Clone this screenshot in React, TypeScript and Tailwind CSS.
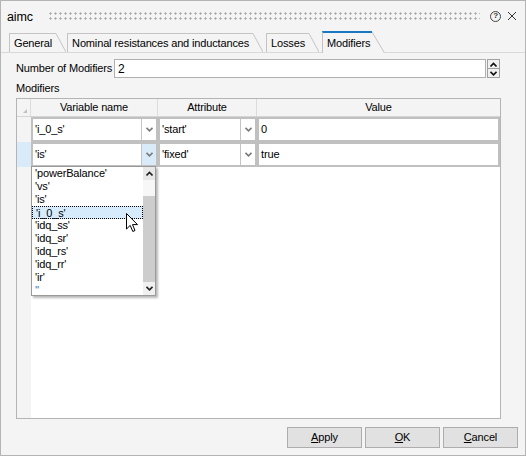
import React from 'react';

const items = ["'powerBalance'", "'vs'", "'is'", "'i_0_s'", "'idq_ss'", "'idq_sr'", "'idq_rs'", "'idq_rr'", "'ir'", "''"];

function Chevron({ up = false, color = '#7a7a7a' }: { up?: boolean; color?: string }) {
  return (
    <svg width="7" height="5" viewBox="0 0 7 5">
      <path
        d={up ? 'M0.5 4.5 L3.5 1.5 L6.5 4.5' : 'M0.5 0.8 L3.5 3.8 L6.5 0.8'}
        fill="none"
        stroke={color}
        strokeWidth="1.6"
      />
    </svg>
  );
}

function Tab({ label, gap, selected = false }: { label: string; gap: string; selected?: boolean }) {
  if (selected) {
    return (
      <div className={`flex items-end ${gap} border-b border-[#d9d9d9]`}>
        <div className="h-[22px] -mb-px bg-[#f4f4f4] flex items-end">
          <div className="h-[22px] border-t-2 border-l border-t-[#1a78c2] border-l-[#c4c4c4] pl-[4px] pr-[2px] flex items-center whitespace-nowrap">
            {label}
          </div>
          <svg width="13" height="22" viewBox="0 0 13 22">
            <line x1="0" y1="1" x2="12.5" y2="22" stroke="#c4c4c4" />
          </svg>
        </div>
      </div>
    );
  }
  return (
    <div className={`flex items-end ${gap} border-b border-[#d9d9d9]`}>
      <div className="h-[19px] border-t border-l border-[#c4c4c4] pl-[4px] pr-[4px] flex items-center whitespace-nowrap">
        {label}
      </div>
      <svg width="10" height="19" viewBox="0 0 10 19">
        <line x1="0" y1="0.5" x2="10" y2="19" stroke="#c4c4c4" />
      </svg>
    </div>
  );
}

function ComboCell({ text, hover = false }: { text: string; hover?: boolean }) {
  return (
    <div className="flex h-full border-2 border-[#c0c0c0] bg-white">
      <div className="flex-1 flex items-center pl-[2px] whitespace-nowrap">{text}</div>
      <div
        className={`w-[15px] border-l border-[#c4c4c4] flex items-center justify-center ${
          hover ? 'bg-[#d9ebf9]' : ''
        }`}
      >
        <Chevron />
      </div>
    </div>
  );
}

function Btn({ first, rest }: { first: string; rest: string }) {
  return (
    <button className="w-[75px] h-[21px] bg-[#e1e1e1] border border-[#adadad] flex items-center justify-center">
      <span className="underline underline-offset-1">{first}</span>
      {rest}
    </button>
  );
}

export default function App() {
  return (
    <div className="w-[526px] h-[456px] bg-[#f4f4f4] border border-[#b4b4b4] flex flex-col text-[11px] tracking-[-0.15px] text-black font-['Liberation_Sans',Arial,sans-serif]">
      {/* Title bar */}
      <div className="h-[30px] flex items-center pl-[6px] pr-[8px] shrink-0">
        <span className="text-[12.5px] pt-[2px]">aimc</span>
        <div className="flex-1 h-[10px] ml-[15px] mr-[10px] bg-[radial-gradient(circle,#a6a6a6_0.9px,transparent_1.3px)] bg-[length:5px_5px]" />
        <span className="w-[11px] h-[11px] rounded-full border border-[#444] flex items-center justify-center text-[8px] font-bold leading-none text-[#333]">
          ?
        </span>
        <svg width="10" height="10" viewBox="0 0 10 10" className="ml-[6px]">
          <path d="M1 1 L9 9 M9 1 L1 9" stroke="#333" strokeWidth="1" />
        </svg>
      </div>

      {/* Tabs */}
      <div className="flex items-end h-[22px] shrink-0">
        <div className="w-[6px] border-b border-[#d9d9d9]" />
        <Tab label="General" gap="pl-[2px]" />
        <Tab label="Nominal resistances and inductances" gap="pl-[1px]" />
        <Tab label="Losses" gap="pl-[3px]" />
        <Tab label="Modifiers" gap="pl-[3px]" selected />
        <div className="flex-1 border-b border-[#d9d9d9]" />
      </div>

      {/* Content */}
      <div className="flex-1 flex flex-col pl-[15px] pr-[24px] pt-[6px] min-h-0">
        <div className="flex items-center h-[19px] shrink-0">
          <span className="w-[98px] shrink-0 whitespace-nowrap">Number of Modifiers</span>
          <div className="flex-1 h-[19px] bg-white border border-[#b0b0b0] flex items-center pl-[3px] text-[12px]">
            2
          </div>
          <div className="w-[13px] h-[19px] ml-[1px] mr-[1px] border border-[#a0a0a0] bg-[#f0f0f0] flex flex-col">
            <div className="flex-1 flex items-center justify-center border-b border-[#a0a0a0]">
              <Chevron up color="#111" />
            </div>
            <div className="flex-1 flex items-center justify-center">
              <Chevron color="#111" />
            </div>
          </div>
        </div>

        <div className="h-[14px] mt-[3px] flex items-center shrink-0">Modifiers</div>

        {/* Table */}
        <div className="relative flex-1 mt-[3px] border border-[#b4b4b4] bg-white flex flex-col min-h-0">
          <div className="grid grid-cols-[14px_127px_99px_1fr] h-[18px] bg-[#f4f4f4] border-b border-[#d5d5d5]">
            <div className="border-r border-[#dcdcdc] flex items-end justify-end pr-[3px] pb-[3px]">
              <svg width="4" height="4" viewBox="0 0 4 4">
                <path d="M4 0 L4 4 L0 4 Z" fill="#c2c2c2" />
              </svg>
            </div>
            <div className="border-r border-[#dcdcdc] flex items-center justify-center">Variable name</div>
            <div className="border-r border-[#dcdcdc] flex items-center justify-center">Attribute</div>
            <div className="flex items-center justify-center">Value</div>
          </div>

          <div className="grid grid-cols-[14px_127px_99px_1fr] h-[25px]">
            <div className="bg-[#f4f4f4]" />
            <ComboCell text="'i_0_s'" />
            <ComboCell text="'start'" />
            <div className="border-2 border-[#c0c0c0] flex items-center pl-[2px]">0</div>
          </div>
          <div className="grid grid-cols-[14px_127px_99px_1fr] h-[25px]">
            <div className="bg-[#d9ebf9]" />
            <ComboCell text="'is'" hover />
            <ComboCell text="'fixed'" />
            <div className="border-2 border-[#c0c0c0] flex items-center pl-[2px]">true</div>
          </div>
          <div className="flex-1 flex">
            <div className="w-[14px] bg-[#f4f4f4]" />
            <div className="flex-1" />
          </div>

          {/* Drop-down list */}
          <div className="absolute left-[14px] top-[67px] w-[125px] h-[130px] bg-white border border-[#9a9a9a] shadow-[2px_2px_2px_rgba(0,0,0,0.28)] flex">
            <div className="flex-1 flex flex-col">
              {items.map((it) => (
                <div
                  key={it}
                  className={`h-[13px] leading-[13px] pl-[3px] whitespace-nowrap ${
                    it === "'i_0_s'" ? 'bg-[#d6ebfb] border border-dotted border-black pl-[2px] leading-[11px]' : ''
                  } ${it === "''" ? 'text-[#1a6fc4]' : ''}`}
                >
                  {it}
                </div>
              ))}
            </div>
            <div className="w-[12px] flex flex-col bg-[#f0f0f0]">
              <div className="h-[13px] flex items-center justify-center bg-[#e8e8e8]">
                <Chevron up color="#222" />
              </div>
              <div className="h-[16px] bg-[#f7f7f7]" />
              <div className="flex-1 bg-[#cdcdcd]" />
              <div className="h-[13px] flex items-center justify-center">
                <Chevron color="#222" />
              </div>
            </div>
          </div>

          {/* Mouse cursor */}
          <svg
            className="absolute left-[109px] top-[114px]"
            width="13"
            height="20"
            viewBox="0 0 13 20"
          >
            <path
              d="M0.5 0.5 L0.5 16 L4.2 12.4 L6.8 18.5 L9 17.5 L6.5 11.6 L11.5 11.6 Z"
              fill="white"
              stroke="black"
              strokeWidth="1"
              strokeLinejoin="round"
            />
          </svg>
        </div>

        {/* Buttons */}
        <div className="flex justify-end gap-[3px] mt-[8px] mb-[7px] -mr-[17px] shrink-0">
          <Btn first="A" rest="pply" />
          <Btn first="O" rest="K" />
          <Btn first="C" rest="ancel" />
        </div>
      </div>
    </div>
  );
}
